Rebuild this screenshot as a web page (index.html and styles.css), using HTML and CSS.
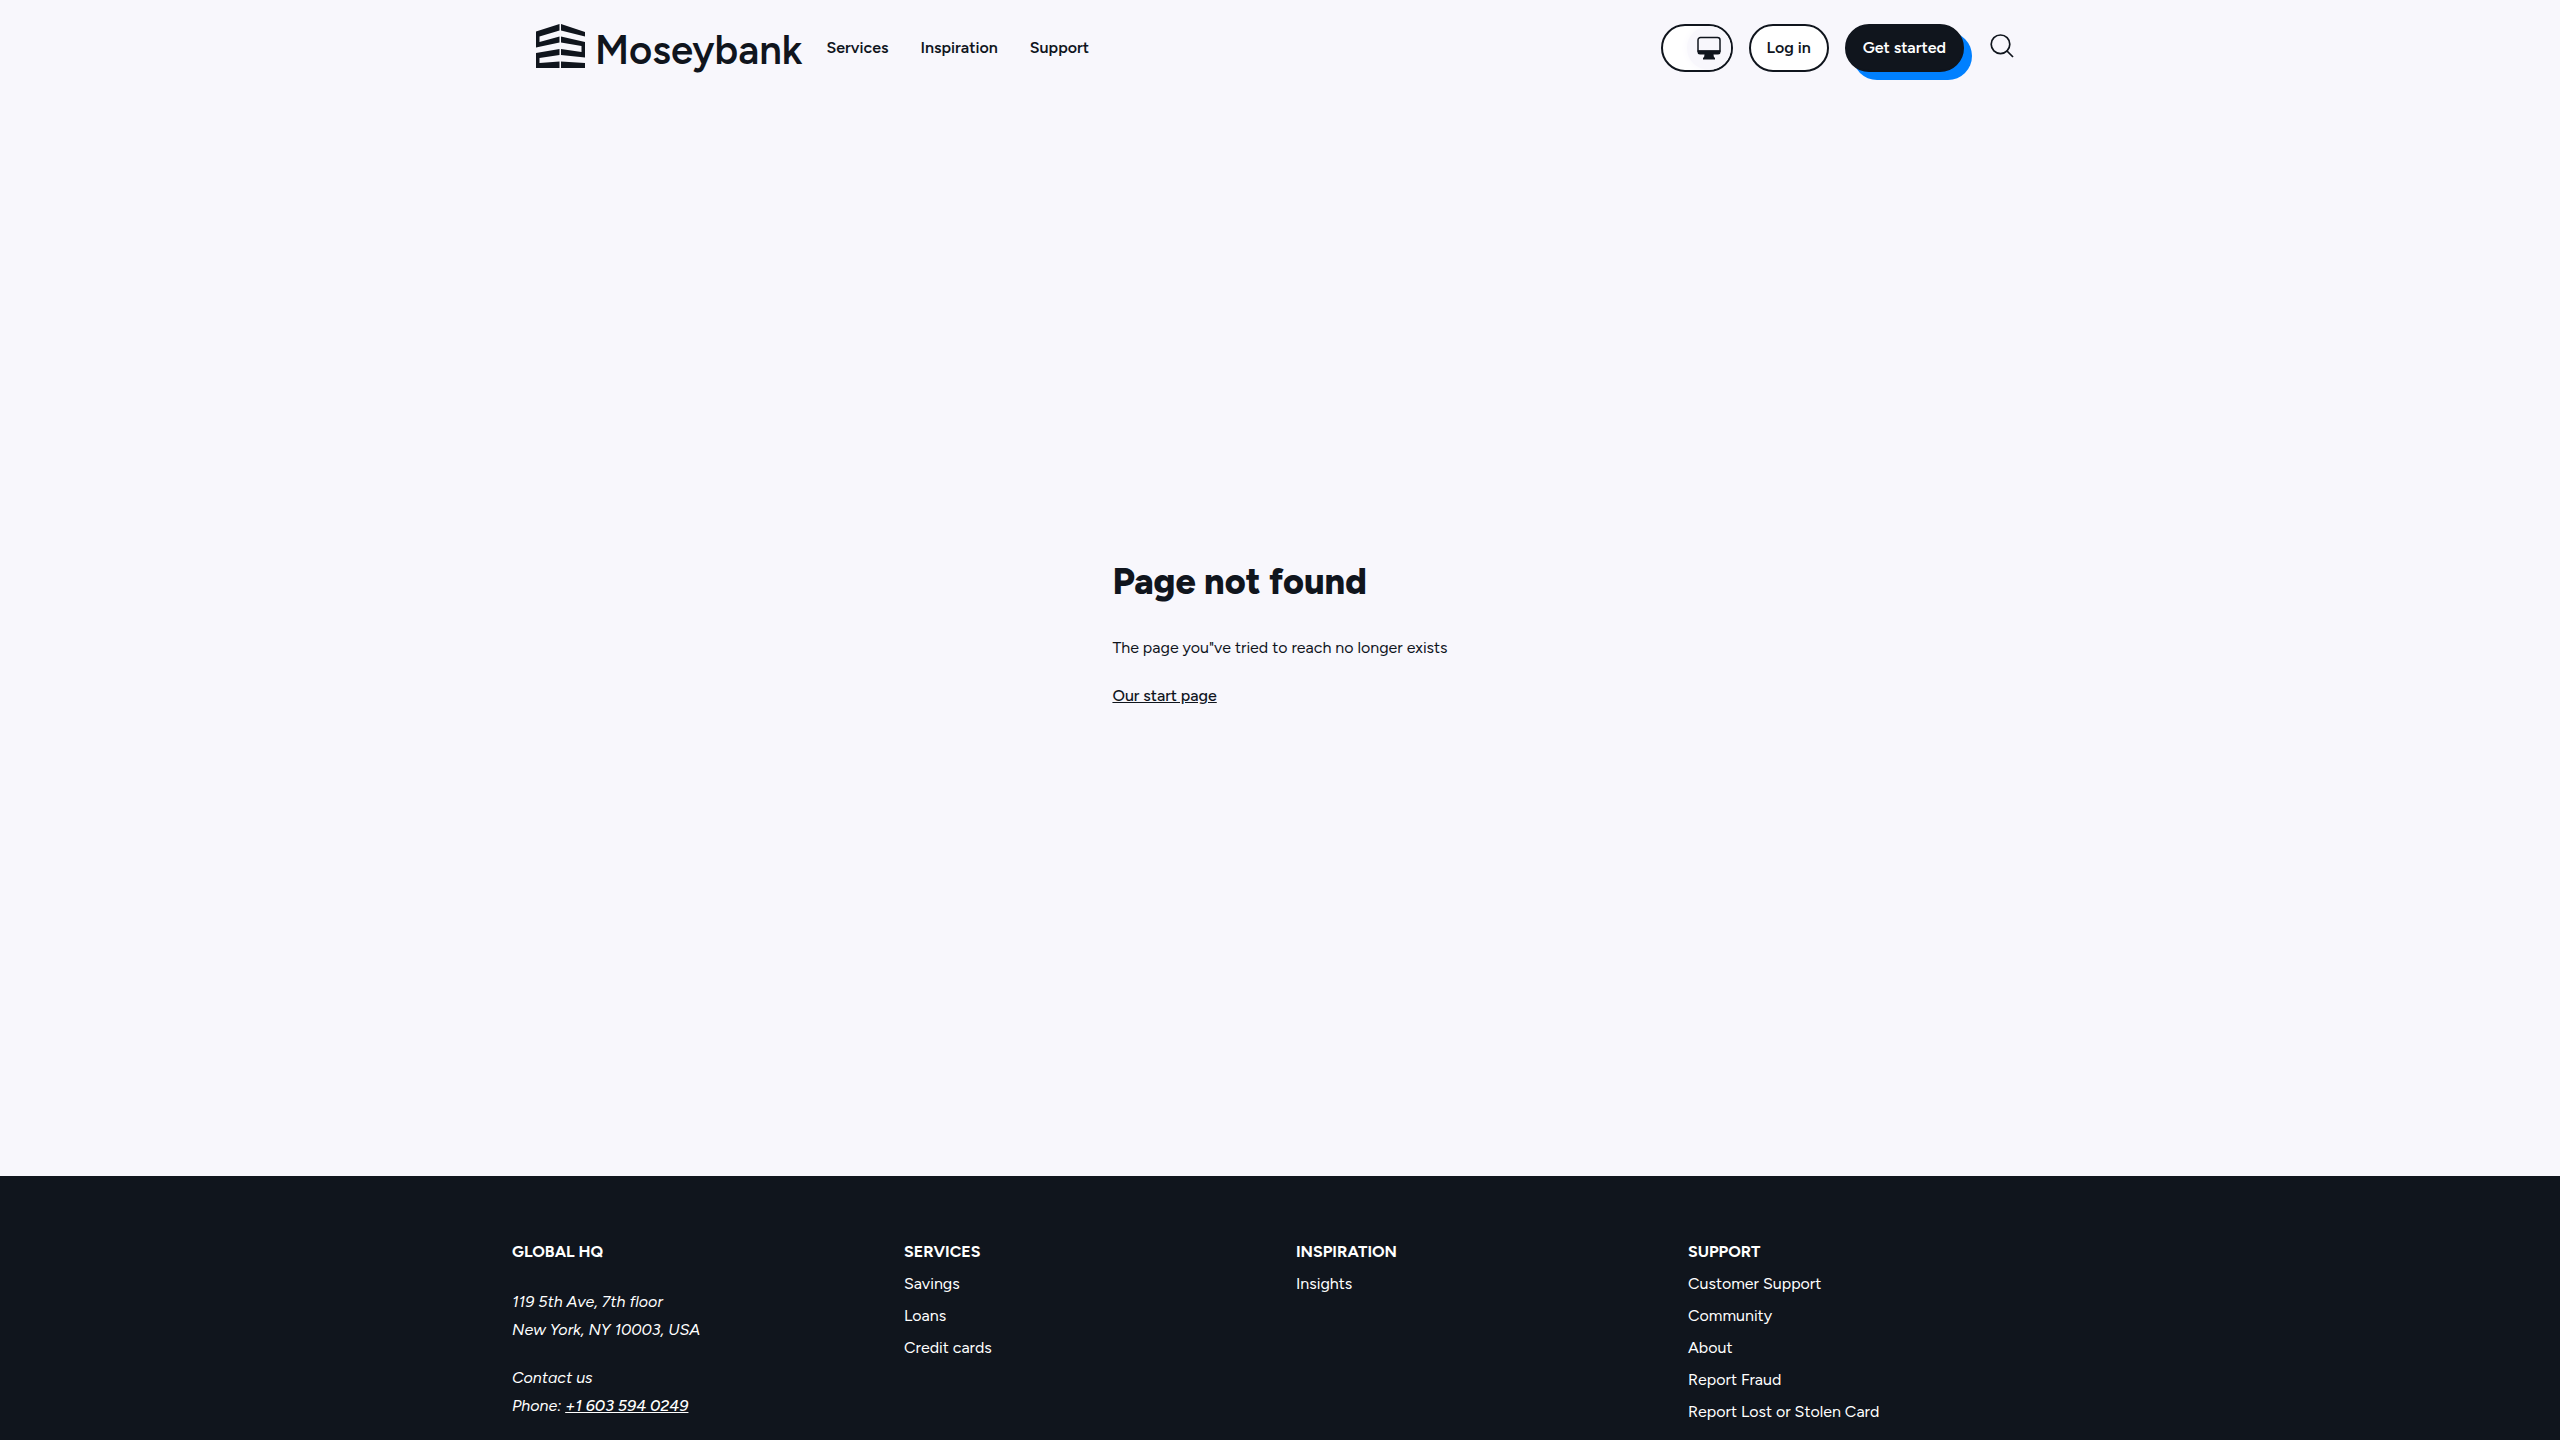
FILE: index.html
```html
<!DOCTYPE html>
<html lang="en">
<head>
<meta charset="utf-8">
<meta name="viewport" content="width=device-width, initial-scale=1">
<title>Page not found - Moseybank</title>
<link rel="stylesheet" href="styles.css">
</head>
<body>
<header class="header">
  <div class="header-inner">
    <a class="logo" href="#">
      <svg class="logo-mark" viewBox="0 0 49 44" aria-hidden="true">
        <path d="M0 7.500 23.500 0V6.500L3.500 12.500V18L23.500 12.500V18.500L0 23.500Z"/>
        <path d="M0 29 23.500 25V31L3.500 34V39L23.500 37.500V44H0Z"/>
        <path d="M25 0 49 8V12.500L25 6.500Z"/>
        <path d="M25 12.500 49 18V33.500L25 31V25L45.500 28V22L25 18.500Z"/>
        <path d="M25 37.500 49 39V44H25Z"/>
      </svg>
      <span class="logo-name">Moseybank</span>
    </a>
    <nav class="nav" aria-label="Main">
      <a href="#">Services</a>
      <a href="#">Inspiration</a>
      <a href="#">Support</a>
    </nav>
    <div class="actions">
      <button class="pill theme-toggle" type="button" aria-label="Use system theme">
        <span class="theme-thumb">
          <svg width="24" height="24" viewBox="0 0 24 24" aria-hidden="true">
            <path d="M3.500 1.500H20.500A2.500 2.500 0 0 1 23 4V15H1V4A2.500 2.500 0 0 1 3.500 1.500Z" fill="none" stroke="currentColor" stroke-width="1.500"/>
            <path d="M1 14.500H23.500V16A2.500 2.500 0 0 1 21 18.500H16.500L17 21.500H18V23.500H6V21.500H7L7.500 18.500H3A2.500 2.500 0 0 1 .5 16V14.500Z" fill="currentColor"/>
          </svg>
        </span>
      </button>
      <a class="pill" href="#">Log in</a>
      <a class="pill pill-primary" href="#">Get started</a>
      <button class="search" type="button" aria-label="Search">
        <svg width="24" height="24" viewBox="0 0 24 24" aria-hidden="true" fill="none" stroke="currentColor" stroke-width="1.700">
          <circle cx="10.500" cy="10.300" r="9.300"/>
          <path d="M16.500 16.500 23 23"/>
        </svg>
      </button>
    </div>
  </div>
</header>
<main class="main">
  <div class="message">
    <h1>Page not found</h1>
    <p>The page you"ve tried to reach no longer exists</p>
    <p><a class="text-link" href="#">Our start page</a></p>
  </div>
</main>
<footer class="footer">
  <div class="footer-grid">
    <section>
      <h2>Global HQ</h2>
      <address>
        <p>119 5th Ave, 7th floor<br>New York, NY 10003, USA</p>
        <p>Contact us<br>Phone: <a class="text-link" href="tel:+16035940249">+1 603 594 0249</a></p>
      </address>
    </section>
    <section>
      <h2>Services</h2>
      <ul>
        <li><a href="#">Savings</a></li>
        <li><a href="#">Loans</a></li>
        <li><a href="#">Credit cards</a></li>
      </ul>
    </section>
    <section>
      <h2>Inspiration</h2>
      <ul>
        <li><a href="#">Insights</a></li>
      </ul>
    </section>
    <section>
      <h2>Support</h2>
      <ul>
        <li><a href="#">Customer Support</a></li>
        <li><a href="#">Community</a></li>
        <li><a href="#">About</a></li>
        <li><a href="#">Report Fraud</a></li>
        <li><a href="#">Report Lost or Stolen Card</a></li>
      </ul>
    </section>
  </div>
</footer>
</body>
</html>
```
FILE: styles.css
```css
:root {
  --ink: #10151d;
  --paper: #f8f7fc;
  --accent: #0080ff;
}

* { box-sizing: border-box; }

body {
  margin: 0;
  min-height: 100vh;
  display: flex;
  flex-direction: column;
  background: var(--paper);
  color: var(--ink);
  font: 400 16px/24px Figtree, Lato, sans-serif;
}

h1, h2, p, ul { margin: 0; }
a { color: inherit; }

.text-link { font-weight: 500; }

.header-inner,
.footer-grid {
  max-width: 1536px;
  margin: 0 auto;
}

.header-inner {
  display: flex;
  align-items: center;
  gap: 24px;
  padding: 24px;
}

.logo {
  display: flex;
  align-items: flex-start;
  gap: 10px;
  height: 48px;
  font-size: 40px;
  font-weight: 600;
  line-height: 52px;
  text-decoration: none;
}

.logo-mark {
  width: 49px;
  height: 44px;
  fill: currentColor;
}

.nav {
  display: flex;
  gap: 32px;
  font-weight: 600;
}

.nav a { text-decoration: none; }

.actions {
  display: flex;
  align-items: center;
  gap: 16px;
  margin-left: auto;
}

.pill {
  display: flex;
  align-items: center;
  height: 48px;
  padding: 0 16px;
  border: 2px solid var(--ink);
  border-radius: 24px;
  background: #fff;
  color: var(--ink);
  font-weight: 600;
  text-decoration: none;
}

.pill-primary {
  background: var(--ink);
  color: #fff;
  box-shadow: 8px 8px 0 var(--accent);
}

.theme-toggle {
  justify-content: flex-end;
  width: 72px;
  padding: 0;
  overflow: hidden;
}

.theme-thumb {
  display: grid;
  place-items: center;
  width: 44px;
  height: 44px;
  border-radius: 22px;
  background: var(--paper);
  box-shadow: 0 0 8px 0 var(--paper);
}

.search {
  display: grid;
  place-items: center;
  width: 44px;
  height: 48px;
  padding: 0 0 4px;
  border: 0;
  background: none;
  color: var(--ink);
}

.main {
  flex: 1;
  display: grid;
  place-items: center;
  padding: 24px;
}

.message {
  display: grid;
  gap: 24px;
}

.message h1 {
  font-size: 36px;
  font-weight: 800;
  line-height: 36px;
  padding-bottom: 12px;
}

.footer {
  padding: 64px 24px 16px;
  background: var(--ink);
  color: #fff;
}

.footer-grid {
  display: grid;
  grid-template-columns: repeat(4, 1fr);
  gap: 32px;
}

.footer h2 {
  font-size: 16px;
  font-weight: 700;
  line-height: 24px;
  text-transform: uppercase;
}

.footer ul {
  display: grid;
  gap: 8px;
  margin-top: 8px;
  padding: 0;
  list-style: none;
}

.footer li a { text-decoration: none; }

.footer address {
  display: grid;
  gap: 20px;
  margin-top: 24px;
  line-height: 28px;
}
```
